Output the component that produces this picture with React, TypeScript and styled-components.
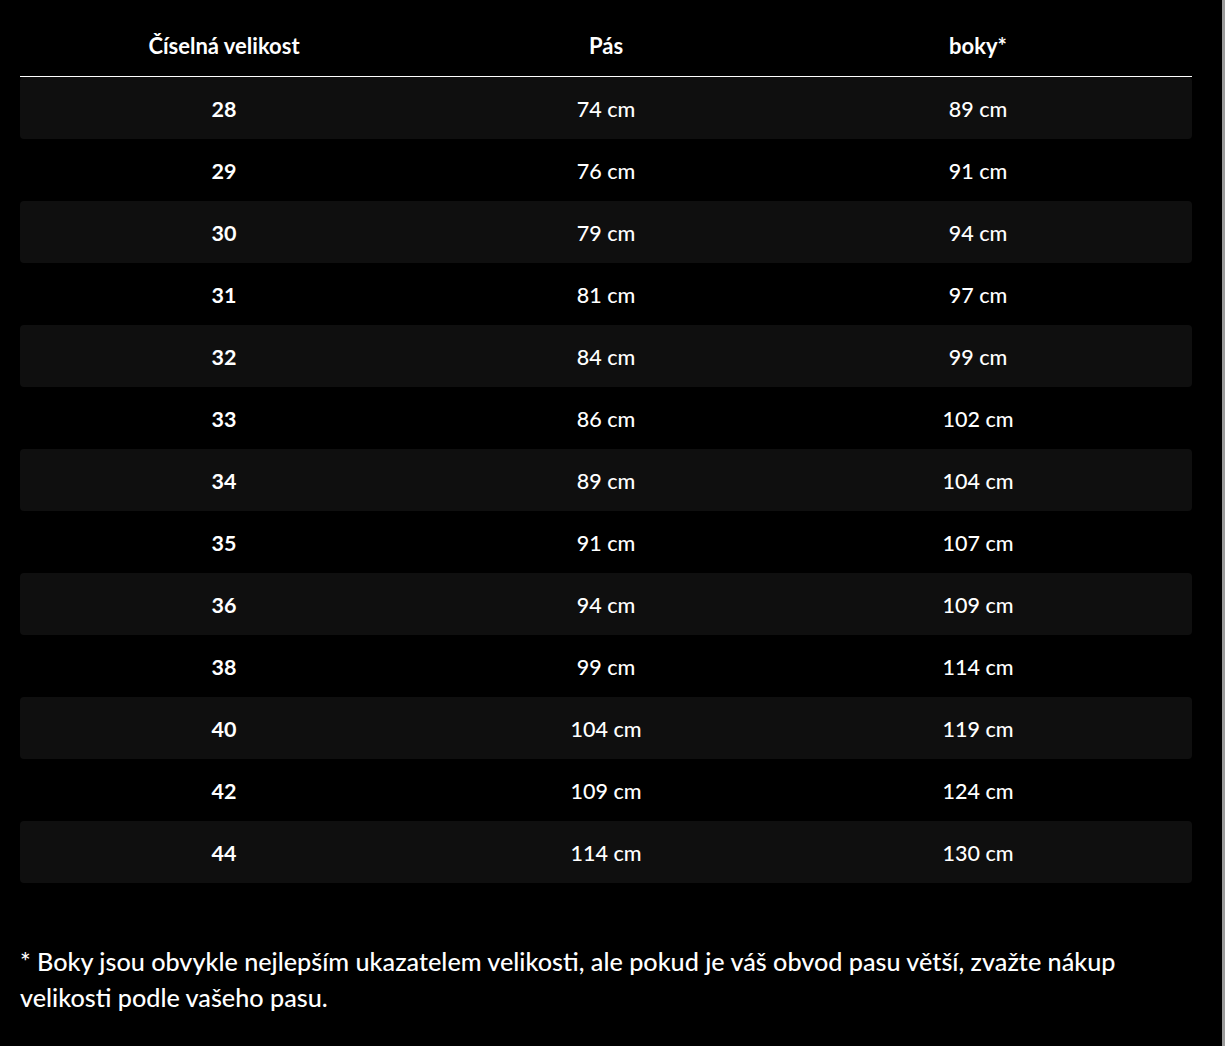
import React from "react";
import styled, { createGlobalStyle } from "styled-components";

const GlobalStyle = createGlobalStyle`
  html, body {
    margin: 0;
    padding: 0;
    background: #000;
  }
  body {
    font-family: Lato, "Open Sans", sans-serif;
    color: #fff;
  }
`;

const Page = styled.div`
  display: flex;
  height: 1046px;
  overflow: hidden;
  background: #000;
`;

const Main = styled.div`
  flex: 1;
  padding: 14px 30px 0 20px;
`;

const Edge = styled.div`
  width: 3px;
  background: #9b9b9b;
`;

const Table = styled.div`
  display: flex;
  flex-direction: column;
  width: 1172px;
`;

const Row = styled.div<{ $striped?: boolean; $head?: boolean }>`
  display: grid;
  grid-template-columns: 408px 356px 388px 20px;
  align-items: center;
  height: 62px;
  border-radius: ${(p) => (p.$head ? "0" : "4px")};
  background: ${(p) => (p.$striped ? "#0f0f0f" : "transparent")};
  border-bottom: ${(p) => (p.$head ? "1px solid #fff" : "none")};
`;

const Cell = styled.div<{ $bold?: boolean; $head?: boolean }>`
  text-align: center;
  font-size: ${(p) => (p.$head ? "22px" : "21.5px")};
  font-weight: ${(p) => (p.$bold ? 700 : 500)};
  line-height: 1;
  margin-top: ${(p) => (p.$head ? "1px" : "3px")};
`;

const Note = styled.p`
  margin: 60px 0 0;
  font-size: 25.2px;
  line-height: 36px;
  font-weight: 500;
  width: 1172px;
`;

const rows: [string, string, string][] = [
  ["28", "74 cm", "89 cm"],
  ["29", "76 cm", "91 cm"],
  ["30", "79 cm", "94 cm"],
  ["31", "81 cm", "97 cm"],
  ["32", "84 cm", "99 cm"],
  ["33", "86 cm", "102 cm"],
  ["34", "89 cm", "104 cm"],
  ["35", "91 cm", "107 cm"],
  ["36", "94 cm", "109 cm"],
  ["38", "99 cm", "114 cm"],
  ["40", "104 cm", "119 cm"],
  ["42", "109 cm", "124 cm"],
  ["44", "114 cm", "130 cm"],
];

export default function App() {
  return (
    <>
      <GlobalStyle />
      <Page>
        <Main>
          <Table>
            <Row $head>
              <Cell $head $bold>Číselná velikost</Cell>
              <Cell $head $bold>Pás</Cell>
              <Cell $head $bold>boky*</Cell>
            </Row>
            {rows.map(([size, waist, hips], i) => (
              <Row key={size} $striped={i % 2 === 0}>
                <Cell $bold>{size}</Cell>
                <Cell>{waist}</Cell>
                <Cell>{hips}</Cell>
              </Row>
            ))}
          </Table>
          <Note>
            * Boky jsou obvykle nejlepším ukazatelem velikosti, ale pokud je
            váš obvod pasu větší, zvažte nákup velikosti podle vašeho pasu.
          </Note>
        </Main>
        <Edge />
      </Page>
    </>
  );
}
